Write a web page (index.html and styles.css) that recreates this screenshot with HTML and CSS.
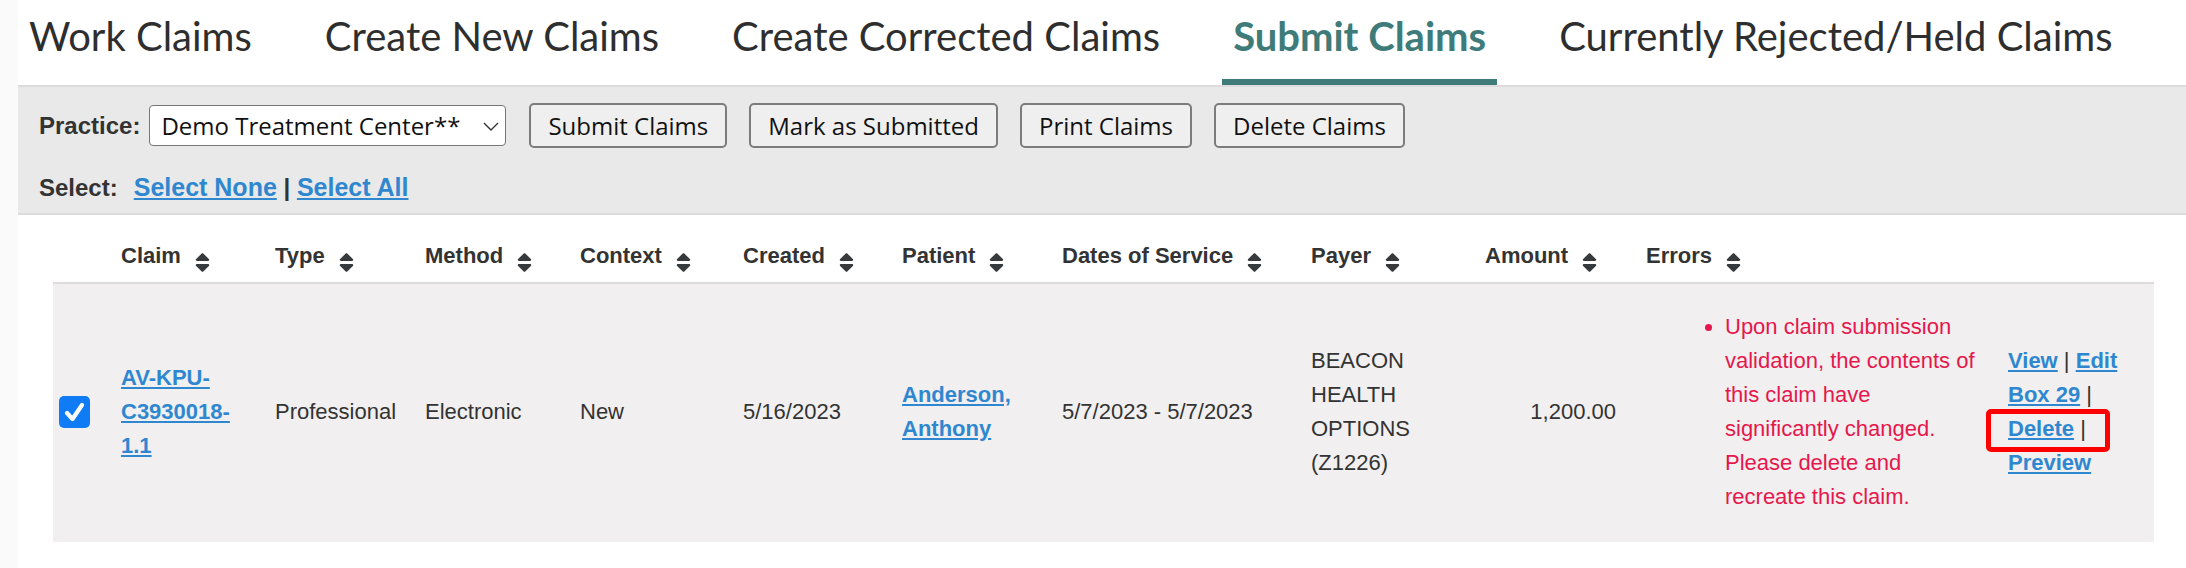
FILE: index.html
```html
<!DOCTYPE html>
<html lang="en">
<head>
<meta charset="utf-8">
<title>Submit Claims</title>
<link rel="stylesheet" href="styles.css">
</head>
<body>
<div class="page">
  <nav class="tabs">
    <a class="tab" href="#">Work Claims</a>
    <a class="tab" href="#">Create New Claims</a>
    <a class="tab" href="#">Create Corrected Claims</a>
    <a class="tab active" href="#">Submit Claims</a>
    <a class="tab" href="#">Currently Rejected/Held Claims</a>
  </nav>

  <div class="toolbar">
    <div class="toolbar-row">
      <label class="label" for="practice">Practice:</label>
      <div class="select-wrap">
        <select id="practice" class="select">
          <option>Demo Treatment Center**</option>
        </select>
        <svg class="chevron" viewBox="0 0 16 9" aria-hidden="true"><path d="M1 1 L8 8 L15 1" fill="none" stroke="#333" stroke-width="1.4"/></svg>
      </div>
      <button class="btn">Submit Claims</button>
      <button class="btn">Mark as Submitted</button>
      <button class="btn">Print Claims</button>
      <button class="btn">Delete Claims</button>
    </div>
    <div class="select-row">
      <span class="label select-label">Select:</span><a class="link" href="#">Select None</a> <span class="sep">|</span> <a class="link" href="#">Select All</a>
    </div>
  </div>

  <table class="claims">
    <colgroup>
      <col class="c-cb"><col class="c-claim"><col class="c-type"><col class="c-method"><col class="c-context"><col class="c-created"><col class="c-patient"><col class="c-dates"><col class="c-payer"><col class="c-amount"><col class="c-errors"><col class="c-actions">
    </colgroup>
    <thead>
      <tr>
        <th></th>
        <th>Claim<svg class="sort" viewBox="0 57 320 398"><path d="M41 288h238c21.4 0 32.1 25.9 17 41L177 448c-9.4 9.4-24.6 9.4-33.9 0L24 329c-15.1-15.1-4.4-41 17-41zm255-105L177 64c-9.4-9.4-24.6-9.4-33.9 0L24 183c-15.1 15.1-4.4 41 17 41h238c21.4 0 32.1-25.9 17-41z"/></svg></th>
        <th>Type<svg class="sort" viewBox="0 57 320 398"><path d="M41 288h238c21.4 0 32.1 25.9 17 41L177 448c-9.4 9.4-24.6 9.4-33.9 0L24 329c-15.1-15.1-4.4-41 17-41zm255-105L177 64c-9.4-9.4-24.6-9.4-33.9 0L24 183c-15.1 15.1-4.4 41 17 41h238c21.4 0 32.1-25.9 17-41z"/></svg></th>
        <th>Method<svg class="sort" viewBox="0 57 320 398"><path d="M41 288h238c21.4 0 32.1 25.9 17 41L177 448c-9.4 9.4-24.6 9.4-33.9 0L24 329c-15.1-15.1-4.4-41 17-41zm255-105L177 64c-9.4-9.4-24.6-9.4-33.9 0L24 183c-15.1 15.1-4.4 41 17 41h238c21.4 0 32.1-25.9 17-41z"/></svg></th>
        <th>Context<svg class="sort" viewBox="0 57 320 398"><path d="M41 288h238c21.4 0 32.1 25.9 17 41L177 448c-9.4 9.4-24.6 9.4-33.9 0L24 329c-15.1-15.1-4.4-41 17-41zm255-105L177 64c-9.4-9.4-24.6-9.4-33.9 0L24 183c-15.1 15.1-4.4 41 17 41h238c21.4 0 32.1-25.9 17-41z"/></svg></th>
        <th>Created<svg class="sort" viewBox="0 57 320 398"><path d="M41 288h238c21.4 0 32.1 25.9 17 41L177 448c-9.4 9.4-24.6 9.4-33.9 0L24 329c-15.1-15.1-4.4-41 17-41zm255-105L177 64c-9.4-9.4-24.6-9.4-33.9 0L24 183c-15.1 15.1-4.4 41 17 41h238c21.4 0 32.1-25.9 17-41z"/></svg></th>
        <th>Patient<svg class="sort" viewBox="0 57 320 398"><path d="M41 288h238c21.4 0 32.1 25.9 17 41L177 448c-9.4 9.4-24.6 9.4-33.9 0L24 329c-15.1-15.1-4.4-41 17-41zm255-105L177 64c-9.4-9.4-24.6-9.4-33.9 0L24 183c-15.1 15.1-4.4 41 17 41h238c21.4 0 32.1-25.9 17-41z"/></svg></th>
        <th>Dates of Service<svg class="sort" viewBox="0 57 320 398"><path d="M41 288h238c21.4 0 32.1 25.9 17 41L177 448c-9.4 9.4-24.6 9.4-33.9 0L24 329c-15.1-15.1-4.4-41 17-41zm255-105L177 64c-9.4-9.4-24.6-9.4-33.9 0L24 183c-15.1 15.1-4.4 41 17 41h238c21.4 0 32.1-25.9 17-41z"/></svg></th>
        <th>Payer<svg class="sort" viewBox="0 57 320 398"><path d="M41 288h238c21.4 0 32.1 25.9 17 41L177 448c-9.4 9.4-24.6 9.4-33.9 0L24 329c-15.1-15.1-4.4-41 17-41zm255-105L177 64c-9.4-9.4-24.6-9.4-33.9 0L24 183c-15.1 15.1-4.4 41 17 41h238c21.4 0 32.1-25.9 17-41z"/></svg></th>
        <th>Amount<svg class="sort" viewBox="0 57 320 398"><path d="M41 288h238c21.4 0 32.1 25.9 17 41L177 448c-9.4 9.4-24.6 9.4-33.9 0L24 329c-15.1-15.1-4.4-41 17-41zm255-105L177 64c-9.4-9.4-24.6-9.4-33.9 0L24 183c-15.1 15.1-4.4 41 17 41h238c21.4 0 32.1-25.9 17-41z"/></svg></th>
        <th>Errors<svg class="sort" viewBox="0 57 320 398"><path d="M41 288h238c21.4 0 32.1 25.9 17 41L177 448c-9.4 9.4-24.6 9.4-33.9 0L24 329c-15.1-15.1-4.4-41 17-41zm255-105L177 64c-9.4-9.4-24.6-9.4-33.9 0L24 183c-15.1 15.1-4.4 41 17 41h238c21.4 0 32.1-25.9 17-41z"/></svg></th>
        <th></th>
      </tr>
    </thead>
    <tbody>
      <tr>
        <td class="td-cb"><span class="checkbox" role="checkbox" aria-checked="true"><svg viewBox="0 0 31 31"><path d="M8 16.5 L13.5 22.5 L23 8.5" fill="none" stroke="#fff" stroke-width="4.2" stroke-linecap="round" stroke-linejoin="round"/></svg></span></td>
        <td class="td-claim"><a class="link" href="#">AV-KPU-C3930018-1.1</a></td>
        <td>Professional</td>
        <td>Electronic</td>
        <td>New</td>
        <td>5/16/2023</td>
        <td class="td-patient"><a class="link" href="#">Anderson, Anthony</a></td>
        <td>5/7/2023 - 5/7/2023</td>
        <td class="td-payer">BEACON HEALTH OPTIONS (Z1226)</td>
        <td class="td-amount">1,200.00</td>
        <td class="td-errors">
          <ul class="errors">
            <li>Upon claim submission validation, the contents of this claim have significantly changed. Please delete and recreate this claim.</li>
          </ul>
        </td>
        <td class="td-actions"><a class="link" href="#">View</a> | <a class="link" href="#">Edit Box 29</a> | <span class="highlight"><a class="link" href="#">Delete</a> |</span> <a class="link" href="#">Preview</a></td>
      </tr>
    </tbody>
  </table>
</div>
</body>
</html>
```

FILE: styles.css
```css
* { box-sizing: border-box; }

html, body {
  margin: 0;
  padding: 0;
}

body {
  background: #fafafa;
  font-family: "Liberation Sans", Arial, sans-serif;
  color: #333;
}

.page {
  margin-left: 18px;
  background: #fff;
  min-height: 568px;
}

/* Tabs */
.tabs {
  display: flex;
  gap: 51px;
}

.tab {
  font-family: Lato, "Open Sans", sans-serif;
  font-size: 40px;
  line-height: 48px;
  color: #2e2e2e;
  text-decoration: none;
  padding: 12px 11px 19px;
  border-bottom: 6px solid transparent;
  white-space: nowrap;
}

.tab.active {
  color: #3e7b79;
  font-weight: 700;
  border-bottom-color: #3e7b79;
}

/* Toolbar */
.toolbar {
  background: #e9e9e9;
  border-top: 2px solid #dcdcdc;
  border-bottom: 2px solid #dcdcdc;
  padding: 16px 21px 8px;
}

.toolbar-row {
  display: flex;
  align-items: center;
  height: 45px;
}

.label {
  font-weight: 700;
  font-size: 24px;
  color: #333;
}

.select-wrap {
  position: relative;
  margin-left: 9px;
  margin-right: 23px;
}

.select {
  appearance: none;
  -webkit-appearance: none;
  display: block;
  width: 357px;
  height: 41px;
  border: 1px solid #767676;
  border-radius: 4px;
  background: #fff;
  font-family: "Open Sans", sans-serif;
  font-size: 24px;
  color: #111;
  padding: 0 0 0 11px;
}

.chevron {
  position: absolute;
  right: 7px;
  top: 17px;
  width: 16px;
  height: 9px;
  pointer-events: none;
}

.btn {
  height: 45px;
  border: 2px solid #7c7c7c;
  border-radius: 5px;
  background: #efefef;
  font-family: "Open Sans", sans-serif;
  font-size: 24px;
  color: #111;
  padding: 0 17px;
  margin-right: 22px;
}

.select-row {
  margin-top: 22px;
  font-size: 24px;
  line-height: 34px;
  font-weight: 700;
  color: #333;
}

.select-row .link {
  font-size: 25px;
}

.select-label {
  margin-right: 16px;
}

.link {
  color: #2f87d0;
  font-weight: 700;
  text-decoration: underline;
  text-decoration-thickness: 2px;
  text-underline-offset: 2px;
}

/* Table */
.claims {
  margin: 14px 0 0 35px;
  width: 2101px;
  border-collapse: collapse;
  table-layout: fixed;
  font-size: 22px;
  line-height: 34px;
}

.c-cb { width: 68px; }
.c-claim { width: 154px; }
.c-type { width: 150px; }
.c-method { width: 155px; }
.c-context { width: 163px; }
.c-created { width: 159px; }
.c-patient { width: 160px; }
.c-dates { width: 249px; }
.c-payer { width: 174px; }
.c-amount { width: 161px; }
.c-errors { width: 362px; }
.c-actions { width: 146px; }

.claims th {
  text-align: left;
  vertical-align: bottom;
  font-weight: 700;
  color: #333;
  padding: 10px 0 9px;
  border-bottom: 2px solid #dcdcdc;
  white-space: nowrap;
}

.sort {
  width: 15px;
  height: 19px;
  margin-left: 14px;
  vertical-align: -9px;
  fill: #363a3d;
}

.claims tbody tr {
  background: #f1eff0;
}

.claims td {
  vertical-align: middle;
  padding: 10px 0 12px;
  color: #333;
}

.td-cb { padding-left: 6px !important; }

.checkbox {
  display: block;
  width: 31px;
  height: 32px;
  border-radius: 5px;
  background: #0f7cf6;
}

.checkbox svg {
  display: block;
  width: 31px;
  height: 32px;
}

.td-claim { padding-right: 30px !important; }
.td-patient { padding-right: 20px !important; }
.td-payer { padding-right: 20px !important; }
.td-amount { text-align: right; padding-right: 30px !important; }
.td-errors { padding-right: 22px !important; }
.td-actions { padding-right: 20px !important; }

.errors {
  margin: 16px 0;
  padding-left: 79px;
  color: #e6174c;
}

.highlight {
  position: relative;
}

.highlight::after {
  content: "";
  position: absolute;
  left: -22px;
  right: -24px;
  top: -7px;
  bottom: -11px;
  border: 5px solid #ff0000;
  border-radius: 5px;
  pointer-events: none;
}
```
